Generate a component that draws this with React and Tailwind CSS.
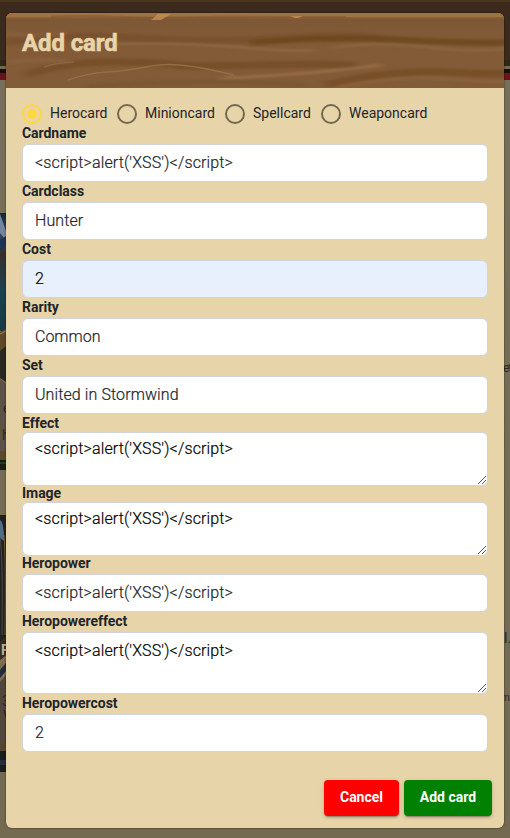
const rows = [
  { name: 'Cardname', value: "<script>alert('XSS')</script>", label: 'h-5 leading-[18px]', box: 'h-[38px] leading-[36px] tracking-[0.14px] text-[#212529]' },
  { name: 'Cardclass', value: 'Hunter', label: 'h-5 leading-[18px]', box: 'h-[38px] leading-[36px] tracking-[0.1px] text-[#212529]' },
  { name: 'Cost', value: '2', label: 'h-5 leading-[18px]', box: 'h-[38px] leading-[36px] text-black bg-[#e8f0fe]' },
  { name: 'Rarity', value: 'Common', label: 'h-5 leading-[18px]', box: 'h-[38px] leading-[36px] text-[#212529]' },
  { name: 'Set', value: 'United in Stormwind', label: 'h-5 leading-[18px]', box: 'h-[38px] leading-[36px] tracking-[0.1px] text-[#212529]' },
  { name: 'Effect', value: "<script>alert('XSS')</script>", label: 'h-[18px] leading-[18px]', box: 'h-[54px] pt-[6px] leading-[20px] tracking-[0.14px] text-black', area: true },
  { name: 'Image', value: "<script>alert('XSS')</script>", label: 'h-4 leading-[14px]', box: 'h-[54px] pt-[6px] leading-[20px] tracking-[0.14px] text-black', area: true },
  { name: 'Heropower', value: "<script>alert('XSS')</script>", label: 'h-[18px] leading-[14px]', box: 'h-[38px] leading-[36px] tracking-[0.14px] text-[#212529]' },
  { name: 'Heropowereffect', value: "<script>alert('XSS')</script>", label: 'h-5 leading-[18px]', box: 'h-[62px] pt-[6px] leading-[24px] tracking-[0.14px] text-black', area: true },
  { name: 'Heropowercost', value: '2', label: 'h-5 leading-[18px]', box: 'h-[38px] leading-[36px] text-[#212529]' },
];

const radios = [
  { name: 'Herocard', on: true, width: 'w-[95px]' },
  { name: 'Minioncard', width: 'w-[108px]' },
  { name: 'Spellcard', width: 'w-[96px]' },
  { name: 'Weaponcard', width: 'w-[120px]' },
];

function Backdrop() {
  return (
    <svg className="absolute inset-0" width="510" height="838" aria-hidden="true">
      <defs>
        <linearGradient id="stone" x1="0" y1="0" x2="0" y2="1">
          <stop offset="0" stopColor="#7a7059" />
          <stop offset="1" stopColor="#746a52" />
        </linearGradient>
        <linearGradient id="art" x1="0" y1="0" x2="0" y2="1">
          <stop offset="0" stopColor="#182331" />
          <stop offset=".15" stopColor="#354863" />
          <stop offset=".35" stopColor="#392e2d" />
          <stop offset=".65" stopColor="#194250" />
          <stop offset="1" stopColor="#173947" />
        </linearGradient>
      </defs>
      <rect width="510" height="838" fill="url(#stone)" />
      <rect width="510" height="61" fill="#3c2a1c" />
      <rect width="510" height="2" fill="#49381f" />
      <rect y="60" width="510" height="6" fill="#30261a" />
      <rect y="66" width="510" height="3" fill="#766b4d" />
      <rect y="69" width="510" height="4" fill="#170d0c" />
      <rect y="73" width="510" height="7" fill="#681518" />
      <rect y="213" width="7" height="118" fill="url(#art)" />
      <path d="M0 214 6 231V240L0 233Z" fill="#7085a0" />
      <path d="M0 240 6 236V246L0 251Z" fill="#1d3354" />
      <path d="M0 332 6 329V347L0 352Z" fill="#5e4829" />
      <path d="M0 334 6 331" stroke="#a28042" />
      <path d="M0 351 6 346V382L0 378Z" fill="#292724" />
      <path d="M0 379 6 384V452H0Z" fill="#5e5145" />
      <rect y="451" width="7" height="9" fill="#5c4a2b" />
      <rect y="460" width="7" height="10" fill="#171d12" />
      <rect y="462" width="7" height="2" fill="#254019" />
      <rect y="515" width="7" height="130" fill="#23211f" />
      <path d="M0 520Q4 522 4 541L0 538Z" fill="#536c82" />
      <path d="M4 535Q6 560 5 635" fill="none" stroke="#74603c" />
      <path d="M0 537Q3 555 2 635" fill="none" stroke="#494c50" />
      <path d="M0 642 6 636V655L0 660Z" fill="#382a1d" />
      <path d="M0 670 6 663V671L0 678Z" fill="#242c39" />
      <path d="M0 663 6 657M0 680 6 673" stroke="#967544" />
      <path d="M0 682 6 675V748H0Z" fill="#51463b" />
      <rect y="742" width="7" height="9" fill="#56462d" />
      <rect y="751" width="7" height="21" fill="#1c1b1d" />
      <rect y="760" width="7" height="5" fill="#252c43" />
    </svg>
  );
}

function Grain() {
  return (
    <svg className="absolute inset-0" width="498" height="75" viewBox="0 0 498 75" aria-hidden="true">
      <defs>
        <linearGradient id="wood" x1="0" y1="0" x2="0" y2="1">
          <stop offset="0" stopColor="#7d5735" />
          <stop offset=".5" stopColor="#835b37" />
          <stop offset="1" stopColor="#825b38" />
        </linearGradient>
        <filter id="soft" x="-5%" y="-30%" width="110%" height="160%" colorInterpolationFilters="sRGB">
          <feGaussianBlur stdDeviation="4 1.1" />
        </filter>
      </defs>
      <rect width="498" height="75" fill="url(#wood)" />
      <g filter="url(#soft)" fill="none">
        <path d="M-5 30Q60 20 130 25T280 25T380 27" stroke="#744b2a" strokeWidth="7" opacity=".55" />
        <path d="M245 30Q320 23 400 27T505 29" stroke="#694519" strokeWidth="6" opacity=".75" />
        <path d="M110 31Q180 29 230 34T310 37" stroke="#94704b" strokeWidth="2" opacity=".8" />
        <path d="M325 35Q370 28 420 34T505 35" stroke="#8d6a43" strokeWidth="2.5" opacity=".8" />
        <path d="M20 62Q60 48 115 49T170 52T250 52T350 53" stroke="#704820" strokeWidth="7" opacity=".6" />
        <path d="M215 65Q290 63 375 52" stroke="#9b7048" strokeWidth="3" opacity=".85" />
        <path d="M0 20Q30 26 60 20" stroke="#8d6543" strokeWidth="4" opacity=".5" />
        <path d="M0 50Q35 44 65 49" stroke="#8d6543" strokeWidth="4" opacity=".6" />
        <path d="M320 72Q390 56 440 59T505 60" stroke="#744b22" strokeWidth="7" opacity=".75" />
        <path d="M325 76Q380 62 440 66T505 68" stroke="#8d673e" strokeWidth="3" opacity=".7" />
        <path d="M80 74Q190 65 300 72" stroke="#77512e" strokeWidth="4" opacity=".5" />
      </g>
      <path d="M62 67Q82 60 101 59T145 53T215 59L228 62" fill="none" stroke="#9b7250" strokeWidth="1.5" opacity=".8" />
      <path d="M38 54Q48 50 68 49" fill="none" stroke="#946b48" strokeWidth="1.5" opacity=".7" />
      <rect width="498" height="4" fill="#a0723f" />
      <rect y="4" width="498" height="1.5" fill="#8b6138" />
      <path d="M45 3.5Q80 2.5 120 4T215 3.5L340 4" fill="none" stroke="#805832" strokeWidth="2" opacity=".6" />
      <path d="M152 1H165L155 7H145Z" fill="#c39150" opacity=".8" />
      <path d="M284 3H297L292 5H289Z" fill="#b9874b" />
    </svg>
  );
}

function Field({ name, value, label, box, area }) {
  return (
    <div>
      <div className={`${label} text-sm font-bold tracking-[-0.04px] text-[#212529]`}>{name}</div>
      <div className={`${box} relative w-[466px] rounded-md border border-[#ced4da] ${name === 'Cost' ? '' : 'bg-white'} px-3 text-base font-light whitespace-pre [-webkit-text-stroke:0.2px_currentColor]`}>
        {value}
        {area && (
          <svg className="absolute right-0 bottom-0" width="10" height="10" aria-hidden="true">
            <path d="M1 9 9 1M5 9 9 5" stroke="#555" strokeWidth="1" />
          </svg>
        )}
      </div>
    </div>
  );
}

export default function App() {
  return (
    <div className="relative h-[838px] w-[510px] overflow-hidden font-['Roboto',sans-serif]">
      <Backdrop />
      <span className="absolute left-[3px] top-[400px] text-sm leading-4 text-[#292724]">e</span>
      <span className="absolute left-[2px] top-[427px] text-sm leading-4 text-[#292724]">h</span>
      <span className="absolute left-px top-[642px] text-sm leading-4 font-bold text-[#b5aea0]">F</span>
      <span className="absolute left-[2px] top-[694px] text-sm leading-[14px] text-[#292724]">3</span>
      <span className="absolute left-[3px] top-[709px] text-sm leading-[14px] text-[#292724]">V</span>
      <span className="absolute left-[503px] top-[360px] text-xs leading-4 tracking-[-1px] text-[#292724]">et</span>
      <span className="absolute left-[504px] top-[630px] text-sm leading-4 text-[#292724]">l.</span>
      <span className="absolute left-[501px] top-[690px] text-[10px] leading-4 text-[#292724]">m</span>
      <main className="relative mt-[13px] ml-[6px] flex h-[815px] w-[498px] flex-col overflow-hidden rounded-md bg-[#e8d4a9] shadow-[0_0_2px_rgba(0,0,0,.65)]">
        <header className="relative h-[75px] shrink-0 px-4 pt-[14px]">
          <Grain />
          <h1 className="relative text-2xl leading-8 font-bold tracking-[-0.1px] text-[#e8d4a9] [-webkit-text-stroke:0.6px_#e8d4a9]">Add card</h1>
        </header>
        <div className="flex h-9 shrink-0 px-4 pt-4">
          {radios.map((r) => (
            <div key={r.name} className={`${r.width} flex h-5 shrink-0 items-center`}>
              <span className={`${r.on ? 'border-[#ffd740]' : 'border-[#746850]'} flex size-5 shrink-0 items-center justify-center rounded-full border-2`}>
                {r.on && <span className="size-[10px] rounded-full bg-[#ffd740]" />}
              </span>
              <span className="pb-0.5 pl-2 text-sm leading-[18px] text-[#212529]">{r.name}</span>
            </div>
          ))}
        </div>
        <div className="px-4">
          {rows.map((r) => <Field key={r.name} {...r} />)}
        </div>
        <footer className="mt-7 flex justify-end gap-[5px] pr-3">
          <button className="h-9 w-[75px] rounded bg-[#ff0000] pb-0.5 text-sm font-bold text-white shadow-[0_3px_1px_-2px_rgba(0,0,0,.2),0_2px_2px_rgba(0,0,0,.14),0_1px_5px_rgba(0,0,0,.12)]">Cancel</button>
          <button className="h-9 w-[88px] rounded bg-[#008000] pb-0.5 text-sm font-bold text-white shadow-[0_3px_1px_-2px_rgba(0,0,0,.2),0_2px_2px_rgba(0,0,0,.14),0_1px_5px_rgba(0,0,0,.12)]">Add card</button>
        </footer>
      </main>
    </div>
  );
}
